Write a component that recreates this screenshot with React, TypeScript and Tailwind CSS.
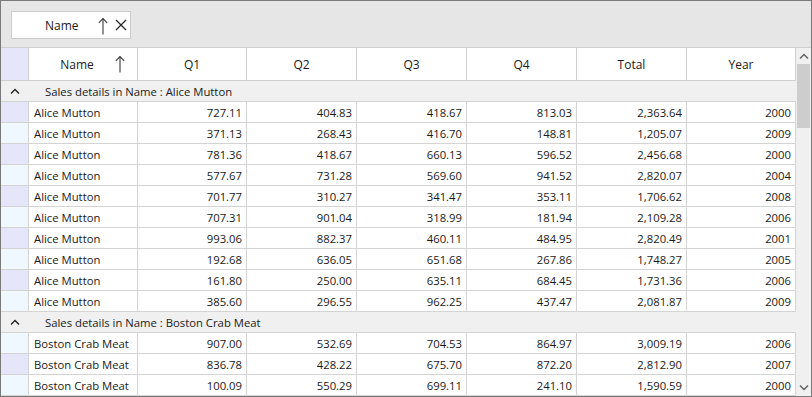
import React from 'react';

type Row = [string, string, string, string, string, string, string];

const groups: { name: string; rows: Row[] }[] = [
  {
    name: 'Alice Mutton',
    rows: [
      ['Alice Mutton', '727.11', '404.83', '418.67', '813.03', '2,363.64', '2000'],
      ['Alice Mutton', '371.13', '268.43', '416.70', '148.81', '1,205.07', '2009'],
      ['Alice Mutton', '781.36', '418.67', '660.13', '596.52', '2,456.68', '2000'],
      ['Alice Mutton', '577.67', '731.28', '569.60', '941.52', '2,820.07', '2004'],
      ['Alice Mutton', '701.77', '310.27', '341.47', '353.11', '1,706.62', '2008'],
      ['Alice Mutton', '707.31', '901.04', '318.99', '181.94', '2,109.28', '2006'],
      ['Alice Mutton', '993.06', '882.37', '460.11', '484.95', '2,820.49', '2001'],
      ['Alice Mutton', '192.68', '636.05', '651.68', '267.86', '1,748.27', '2005'],
      ['Alice Mutton', '161.80', '250.00', '635.11', '684.45', '1,731.36', '2006'],
      ['Alice Mutton', '385.60', '296.55', '962.25', '437.47', '2,081.87', '2009'],
    ],
  },
  {
    name: 'Boston Crab Meat',
    rows: [
      ['Boston Crab Meat', '907.00', '532.69', '704.53', '864.97', '3,009.19', '2006'],
      ['Boston Crab Meat', '836.78', '428.22', '675.70', '872.20', '2,812.90', '2007'],
      ['Boston Crab Meat', '100.09', '550.29', '699.11', '241.10', '1,590.59', '2000'],
    ],
  },
];

const cols = ['w-[109px]', 'w-[109px]', 'w-[110px]', 'w-[110px]', 'w-[110px]', 'w-[110px]', 'w-[109px]'];
const headers = ['Name', 'Q1', 'Q2', 'Q3', 'Q4', 'Total', 'Year'];

function SortArrow() {
  return (
    <svg width="10" height="18" viewBox="0 0 10 18" fill="none" stroke="#3a3a3a" strokeWidth="1.1">
      <path d="M5 1.5 V17.5" />
      <path d="M0.8 5.8 L5 1.5 L9.2 5.8" />
    </svg>
  );
}

function Caret({ up = true, color = '#222' }: { up?: boolean; color?: string }) {
  return (
    <svg width="10" height="6" viewBox="0 0 10 6" fill="none" stroke={color} strokeWidth="1.4">
      <path d={up ? 'M1 5.5 L5 1.5 L9 5.5' : 'M1 0.5 L5 4.5 L9 0.5'} />
    </svg>
  );
}

export default function App() {
  let idx = 0;
  const body: React.ReactNode[] = [];
  groups.forEach((g) => {
    idx++;
    body.push(
      <div key={'g' + g.name} className="flex h-[21px] border-b border-[#d4d4d4] bg-[#f0f0f0] items-center">
        <div className="w-[28px] flex justify-center">
          <Caret />
        </div>
        <div className="pl-[16px] pt-[2px]">Sales details in Name : {g.name}</div>
      </div>
    );
    g.rows.forEach((r, i) => {
      idx++;
      const lav = idx % 2 === 0;
      body.push(
        <div key={g.name + i} className="flex h-[21px] border-b border-[#d4d4d4] bg-white">
          <div className={`w-[28px] border-r border-[#d4d4d4] ${lav ? 'bg-[#e6e6fa]' : 'bg-[#f0f8ff]'}`} />
          {r.map((c, j) => (
            <div
              key={j}
              className={`${cols[j]} shrink-0 border-r border-[#d4d4d4] flex items-center pt-[2px] ${
                j === 0 ? 'pl-[5px]' : 'justify-end pr-[4px]'
              }`}
            >
              {c}
            </div>
          ))}
        </div>
      );
    });
  });

  return (
    <div
      className="w-[812px] h-[397px] border border-[#7a7a7a] flex flex-col overflow-hidden text-[11.3px] text-[#1a1a1a] bg-white"
      style={{ fontFamily: '"Open Sans", "Noto Sans", sans-serif' }}
    >
      <div className="h-[46px] bg-[#e6e6e6] pl-[10px] pt-[10px] shrink-0">
        <div className="w-[120px] h-[28px] bg-white border border-[#cccccc] flex items-center">
          <span className="ml-[33px] pt-[1px] text-[12px]">Name</span>
          <span className="ml-[19px] mt-[1px]">
            <SortArrow />
          </span>
          <svg className="ml-[7px]" width="12" height="12" viewBox="0 0 12 12" stroke="#2a2a2a" strokeWidth="1.3">
            <path d="M1 1 L11 11 M11 1 L1 11" />
          </svg>
        </div>
      </div>
      <div className="flex flex-1 min-h-0 border-t border-[#cfcfcf]">
        <div className="w-[795px] flex flex-col">
          <div className="flex h-[33px] border-b border-[#cfcfcf] shrink-0 text-[12px]">
            <div className="w-[28px] bg-[#e6e6fa] border-r border-[#cfcfcf]" />
            {headers.map((h, j) => (
              <div key={h} className={`${cols[j]} shrink-0 border-r border-[#cfcfcf] flex items-center justify-center relative pt-[1px]`}>
                {j === 0 ? (
                  <>
                    <span className="ml-[-12px]">{h}</span>
                    <span className="absolute left-[86px] top-[7px]">
                      <SortArrow />
                    </span>
                  </>
                ) : (
                  h
                )}
              </div>
            ))}
          </div>
          <div className="flex flex-col">{body}</div>
        </div>
        <div className="w-[15px] bg-[#f0f0f0] flex flex-col">
          <div className="h-[16px] flex items-center justify-center">
            <Caret color="#606060" />
          </div>
          <div className="h-[64px] mx-[1px] bg-[#cdcdcd]" />
          <div className="flex-1" />
          <div className="h-[16px] flex items-center justify-center">
            <Caret up={false} color="#606060" />
          </div>
        </div>
      </div>
    </div>
  );
}
